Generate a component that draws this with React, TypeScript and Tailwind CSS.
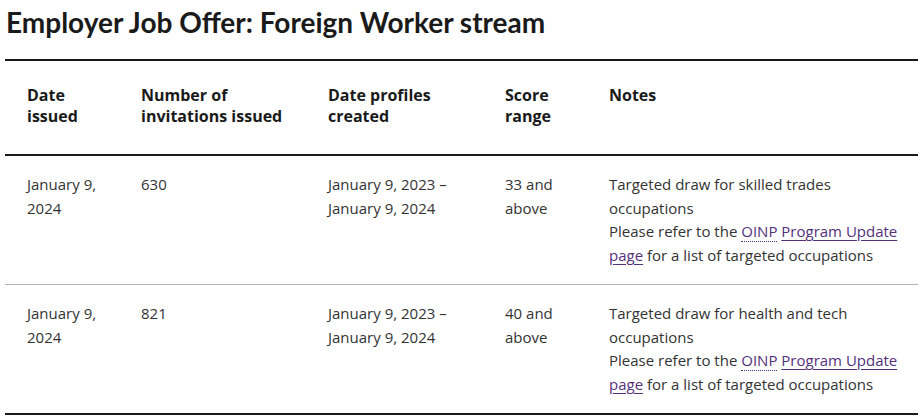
import React from 'react';

const rows = [
  {
    date: 'January 9, 2024',
    count: '630',
    created: ['January 9, 2023 –', 'January 9, 2024'],
    score: '33 and above',
    note: 'Targeted draw for skilled trades occupations',
  },
  {
    date: 'January 9, 2024',
    count: '821',
    created: ['January 9, 2023 –', 'January 9, 2024'],
    score: '40 and above',
    note: 'Targeted draw for health and tech occupations',
  },
];

const th = 'text-left align-top pl-[22px] pr-[12px] pt-6 pb-[27px] text-[16px] leading-[21px] font-bold text-[#1a1a1a]';
const td = 'align-top pl-[22px] pr-[12px] py-[17px] text-[15px] leading-[23.5px] text-[#333]';

export default function App() {
  return (
    <div className="bg-white w-[921px] h-[419px] overflow-hidden" style={{ fontFamily: '"Open Sans", "Noto Sans", sans-serif' }}>
      <h2
        className="pl-[6px] pt-[5px] mb-[20px] text-[28px] leading-[34px] font-bold text-[#1a1a1a]"
        style={{ fontFamily: 'Lato, "Open Sans", sans-serif' }}
      >
        Employer Job Offer: Foreign Worker stream
      </h2>
      <table className="ml-[5px] w-[913px] table-fixed border-collapse border-t-2 border-[#1a1a1a]">
        <colgroup>
          <col className="w-[114px]" />
          <col className="w-[187px]" />
          <col className="w-[177px]" />
          <col className="w-[104px]" />
          <col className="w-[331px]" />
        </colgroup>
        <thead>
          <tr className="border-b-2 border-[#1a1a1a]">
            <th className={th}>Date issued</th>
            <th className={th}>Number of invitations issued</th>
            <th className={th}>Date profiles created</th>
            <th className={th}>Score range</th>
            <th className={th}>Notes</th>
          </tr>
        </thead>
        <tbody>
          {rows.map((r, i) => (
            <tr
              key={i}
              className={i === rows.length - 1 ? 'border-b-2 border-[#1a1a1a]' : 'border-b border-[#b3b3b3]'}
            >
              <td className={td}>{r.date}</td>
              <td className={td}>{r.count}</td>
              <td className={td}>
                {r.created[0]}
                <br />
                {r.created[1]}
              </td>
              <td className={td}>{r.score}</td>
              <td className={td}>
                {r.note}
                <br />
                Please refer to the{' '}
                <a href="#" className="text-[#55307a]">
                  <abbr className="no-underline border-b border-dotted border-[#55307a]">OINP</abbr>{' '}
                  <span className="underline underline-offset-[3px]">Program Update page</span>
                </a>{' '}
                for a list of targeted occupations
              </td>
            </tr>
          ))}
        </tbody>
      </table>
    </div>
  );
}
